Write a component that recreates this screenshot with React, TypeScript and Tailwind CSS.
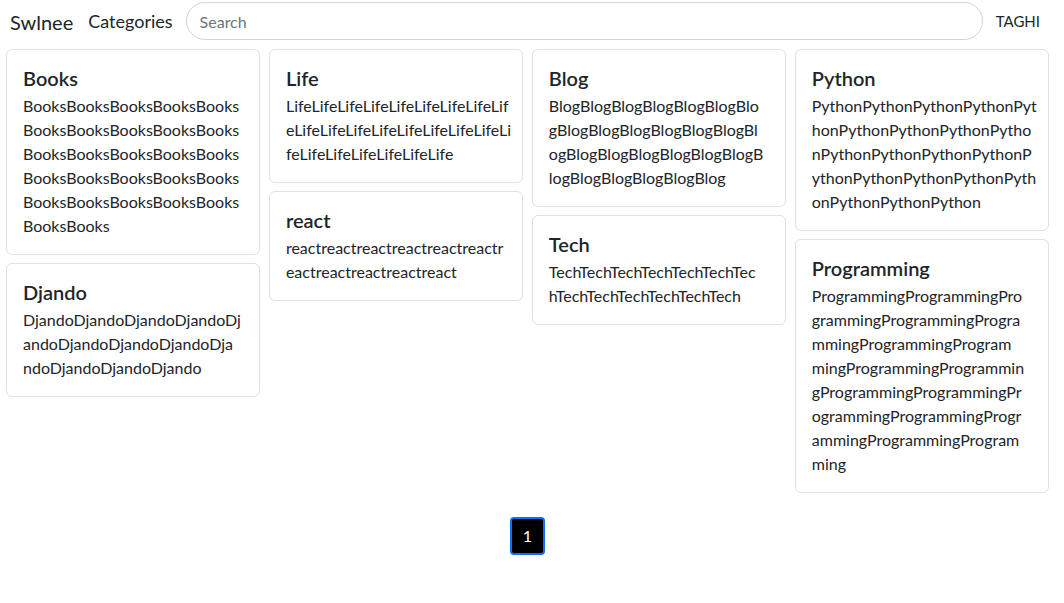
import React from "react";

interface Post {
  title: string;
  lines: string[];
}

const columns: Post[][] = [
  [
    {
      title: "Books",
      lines: [
        "BooksBooksBooksBooksBooks",
        "BooksBooksBooksBooksBooks",
        "BooksBooksBooksBooksBooks",
        "BooksBooksBooksBooksBooks",
        "BooksBooksBooksBooksBooks",
        "BooksBooks",
      ],
    },
    {
      title: "Djando",
      lines: ["DjandoDjandoDjandoDjandoDj", "andoDjandoDjandoDjandoDja", "ndoDjandoDjandoDjando"],
    },
  ],
  [
    {
      title: "Life",
      lines: [
        "LifeLifeLifeLifeLifeLifeLifeLifeLif",
        "eLifeLifeLifeLifeLifeLifeLifeLifeLi",
        "feLifeLifeLifeLifeLifeLife",
      ],
    },
    {
      title: "react",
      lines: ["reactreactreactreactreactreactr", "eactreactreactreactreact"],
    },
  ],
  [
    {
      title: "Blog",
      lines: [
        "BlogBlogBlogBlogBlogBlogBlo",
        "gBlogBlogBlogBlogBlogBlogBl",
        "ogBlogBlogBlogBlogBlogBlogB",
        "logBlogBlogBlogBlogBlog",
      ],
    },
    {
      title: "Tech",
      lines: ["TechTechTechTechTechTechTec", "hTechTechTechTechTechTech"],
    },
  ],
  [
    {
      title: "Python",
      lines: [
        "PythonPythonPythonPythonPyt",
        "honPythonPythonPythonPytho",
        "nPythonPythonPythonPythonP",
        "ythonPythonPythonPythonPyth",
        "onPythonPythonPython",
      ],
    },
    {
      title: "Programming",
      lines: [
        "ProgrammingProgrammingPro",
        "grammingProgrammingProgra",
        "mmingProgrammingProgram",
        "mingProgrammingProgrammin",
        "gProgrammingProgrammingPr",
        "ogrammingProgrammingProgr",
        "ammingProgrammingProgram",
        "ming",
      ],
    },
  ],
];

const PostCard: React.FC<{ post: Post }> = ({ post }) => (
  <div className="bg-white border border-[#dee2e6] rounded-[6px] p-4 mb-2">
    <h5 className="text-[20px] leading-[24px] font-semibold mb-1">{post.title}</h5>
    <p className="text-[16px] leading-[24px]">
      {post.lines.map((l, i) => (
        <span key={i} className="block whitespace-nowrap">
          {l}
        </span>
      ))}
    </p>
  </div>
);

export default function App() {
  return (
    <div className="min-h-screen bg-white text-[#212529] font-['Segoe_UI',Lato,'Noto_Sans',sans-serif]">
      <nav className="h-[42px] flex items-center pl-[10px] pr-[24px]">
        <span className="text-[20px] mr-[15px] mt-[1px]">Swlnee</span>
        <span className="text-[18px] mr-[13px] mt-[1px]">Categories</span>
        <input
          type="text"
          placeholder="Search"
          className="flex-1 h-[38px] rounded-full border border-[#ced4da] px-[13px] text-[16px] placeholder:text-[#6c757d] outline-none"
        />
        <span className="ml-[13px] text-[15px]">TAGHI</span>
      </nav>
      <div className="pl-[6px] pr-[15px] mt-[7px]">
        <div className="grid grid-cols-4 gap-[8.7px] items-start">
          {columns.map((col, i) => (
            <div key={i} className="flex flex-col">
              {col.map((p) => (
                <PostCard key={p.title} post={p} />
              ))}
            </div>
          ))}
        </div>
        <div className="flex justify-center mt-[16px]">
          <button className="w-[35px] h-[38px] bg-black text-white text-[16px] rounded-[4px] border-2 border-[#0d6efd]">
            1
          </button>
        </div>
      </div>
    </div>
  );
}
